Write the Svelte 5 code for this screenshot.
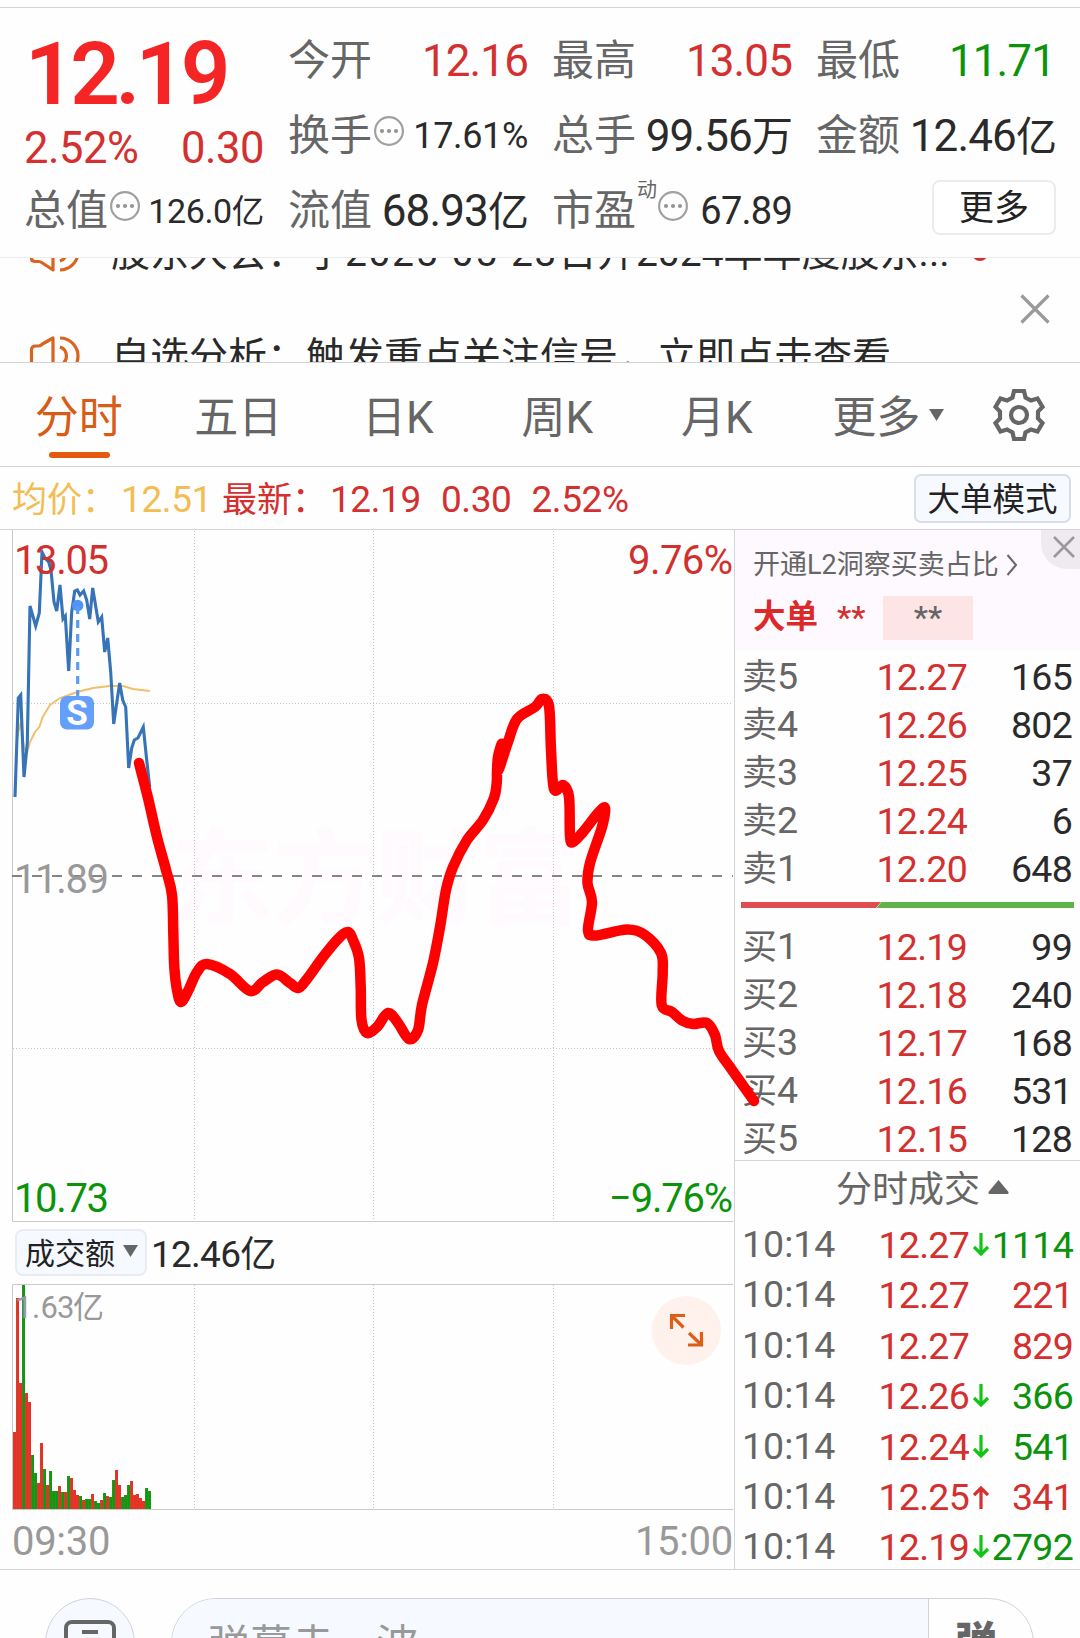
<script>
	const sells = [
		['卖5', '12.27', '165'],
		['卖4', '12.26', '802'],
		['卖3', '12.25', '37'],
		['卖2', '12.24', '6'],
		['卖1', '12.20', '648']
	];
	const buys = [
		['买1', '12.19', '99'],
		['买2', '12.18', '240'],
		['买3', '12.17', '168'],
		['买4', '12.16', '531'],
		['买5', '12.15', '128']
	];
	const trades = [
		{ price: '12.27', arrow: 'down', qty: '1114', side: 'green' },
		{ price: '12.27', arrow: '', qty: '221', side: 'red' },
		{ price: '12.27', arrow: '', qty: '829', side: 'red' },
		{ price: '12.26', arrow: 'down', qty: '366', side: 'green' },
		{ price: '12.24', arrow: 'down', qty: '541', side: 'green' },
		{ price: '12.25', arrow: 'up', qty: '341', side: 'red' },
		{ price: '12.19', arrow: 'down', qty: '2792', side: 'green' }
	];
	const tabs = ['分时', '五日', '日K', '周K', '月K'];

	// turnover per minute: side + bar height
	const volumes =
		'r77 r211 r126 g224 r116 r107 g54 g36 r26 r66 g40 r24 g38 g18 g18 r23 g17 r17 g33 r31 r19 r14 g13 r9 g10 g10 r15 g8 g6 r9 g16 r13 g12 g29 r39 r24 g12 g14 g24 r28 r14 r15 r11 r8 g21 g18'
			.split(' ')
			.map((v, i) => ({ x: 13 + i * 3, h: +v.slice(1), color: v[0] === 'r' ? '#f32a28' : '#0b9a12' }));

	const priceLine =
		'15,797 18.3,698 20.7,695 24,777 27.3,743 30,606 35.7,626 39.3,613 42,552 45,558 48.7,562 51,570 54,602 56.7,611 60,585 63,619 65.3,616 68.7,671 71.7,612 74.7,591 77.3,590 80,595 83.7,591 86.7,600 89.7,619 92.7,588 98.3,622 101.7,617 104.7,652 107.7,638 110.7,672 113.7,724 116.7,703 119.7,683 122.7,700 125.7,707 128.7,768 131.7,748 134.3,740 138,738 143.3,727 146.7,760 149.7,787';
	const avgLine =
		'15,795 17.3,737 20.7,722 24,748 27.3,752 30,742 35,732 39.3,727 42.7,717 50,705 60,698 77.3,692 93,688 110,686 123,686 133,689 149.7,691';

	const drawn = [
		[139, 763], [148, 798], [157, 837], [166, 870], [172, 895], [173.3, 933], [174.3, 967], [177, 990],
		[181, 1002], [188, 991], [197, 972], [207, 964], [230, 974], [250, 991], [263, 982], [277, 974.5],
		[290, 983], [298.5, 988], [307, 979], [323, 957], [338, 939], [347.7, 932], [353, 940], [359, 958],
		[360.7, 987], [361.5, 1020], [367, 1033], [377, 1027], [388, 1013], [398, 1023], [409, 1039],
		[418, 1030], [422, 1005], [433, 963], [440, 927], [446, 890], [453, 867], [467, 840], [483, 820],
		[494, 798], [496.7, 783], [497, 772], [498, 757], [502, 744], [498, 771], [508, 742], [517, 719],
		[535, 707], [542, 699], [549, 706], [551, 750], [554, 789], [563, 785], [569, 797], [570, 836],
		[573, 842], [583, 832], [598, 813], [605, 808], [602, 827], [590, 863], [587.5, 883], [592, 902],
		[588, 930], [595, 935.5], [627, 929.5], [645, 935], [661, 953], [662.7, 973], [661.7, 1005],
		[672, 1012], [683, 1021], [693, 1024], [707, 1023], [715, 1035], [719, 1051], [732, 1070], [754, 1101]
	];

	// catmull-rom through every point
	function smooth(pts) {
		let d = `M${pts[0]}`;
		for (let i = 0; i < pts.length - 1; i++) {
			const a = pts[i - 1] || pts[i];
			const b = pts[i];
			const c = pts[i + 1];
			const e = pts[i + 2] || c;
			d += `C${b[0] + (c[0] - a[0]) / 6},${b[1] + (c[1] - a[1]) / 6} ${c[0] - (e[0] - b[0]) / 6},${c[1] - (e[1] - b[1]) / 6} ${c}`;
		}
		return d;
	}
</script>

{#snippet info()}
	<svg class="info" width="30" height="30" viewBox="0 0 30 30">
		<circle cx="15" cy="15" r="13.9" fill="none" stroke="#a0a0a0" stroke-width="2.200" />
		<circle cx="8" cy="15" r="2.100" fill="#949494" />
		<circle cx="15" cy="15" r="2.100" fill="#949494" />
		<circle cx="22" cy="15" r="2.100" fill="#949494" />
	</svg>
{/snippet}

{#snippet speaker()}
	<svg class="speaker" width="52" height="44" viewBox="0 0 52 44">
		<g fill="none" stroke="#d9641f" stroke-width="3.2">
			<path d="M3.500 29V16q0-4 4-4h3q2 0 4-2L25 4V40L14.500 33q-2-1.500-4-1.500H7.500q-4 0-4-3z" stroke-linejoin="round" />
			<path d="M32 4a18 18 0 0 1 0 36" />
			<path d="M32 13a9.500 9.500 0 0 1 0 18" />
		</g>
	</svg>
{/snippet}

<div class="page">
	<header class="quote">
		<div class="cell big">12.19</div>
		<div class="cell"><span>今开</span><b class="red">12.16</b></div>
		<div class="cell"><span>最高</span><b class="red">13.05</b></div>
		<div class="cell"><span>最低</span><b class="green low">11.71</b></div>

		<div class="cell change red"><b>2.52%</b><b>0.30</b></div>
		<div class="cell"><span>换手{@render info()}</span><b class="m">17.61%</b></div>
		<div class="cell"><span>总手</span><b>99.56<i>万</i></b></div>
		<div class="cell"><span>金额</span><b>12.46<i>亿</i></b></div>

		<div class="cell"><span>总值{@render info()}</span><b class="s">126.0<i>亿</i></b></div>
		<div class="cell"><span>流值</span><b>68.93<i>亿</i></b></div>
		<div class="cell"><span>市盈<sup>动</sup>{@render info()}</span><b class="l">67.89</b></div>
		<div class="cell end"><button class="more">更多</button></div>
	</header>

	<section class="news">
		<div class="lines">
			<div class="line">
				{@render speaker()}
				<p>股东大会：于<em>2025-05-23</em>日开2024年年度股东...</p>
				<span class="dot"></span>
			</div>
			<div class="line">
				{@render speaker()}
				<p>自选分析：触发重点关注信号，立即点击查看</p>
			</div>
		</div>
		<svg class="close" width="30" height="30" viewBox="0 0 30 30">
			<path d="M1.500 1.500l27 27M28.500 1.500l-27 27" stroke="#9a9a9a" stroke-width="3.200" />
		</svg>
	</section>

	<nav class="tabs">
		{#each tabs as tab, i}
			<div class="tab" class:active={i === 0}>{tab}</div>
		{/each}
		<div class="tab last">
			更多<svg width="15" height="12" viewBox="0 0 15 12"><path d="M0 0h15l-7.500 12z" fill="#666" /></svg>
		</div>
		<div class="gear">
			<svg width="54" height="54" viewBox="-27 -27 54 54" fill="none" stroke="#666" stroke-width="4.200">
				<path
					d="M-5-24H5L6.500-17.500L12-14.500L18.500-16.500L23.500-8L19-3.500V3.500L23.500 8L18.500 16.500L12 14.500L6.500 17.500L5 24H-5L-6.500 17.500L-12 14.500L-18.500 16.500L-23.500 8L-19 3.500V-3.500L-23.500-8L-18.500-16.500L-12-14.500L-6.500-17.500z"
				/>
				<circle r="8" />
			</svg>
		</div>
	</nav>

	<div class="latest">
		<span class="avg">均价：<b>12.51</b></span>
		<span class="red">最新：<b>12.19</b><b>0.30</b><b>2.52%</b></span>
		<button class="mode">大单模式</button>
	</div>

	<main>
		<div class="charts">
			<svg class="chart" width="734" height="692" viewBox="0 530 734 692">
				<text x="170" y="916" class="mark" textLength="412">东方财富</text>
				<g class="grid">
					<path d="M194.500 531V1221M373.500 531V1221M553.500 531V1221M13 703.500H733M13 1048.500H733" />
				</g>
				<path d="M12.500 530V1221.500H733" fill="none" stroke="#cacaca" />
				<path d="M12 876H733" stroke="#858585" stroke-width="2" stroke-dasharray="10 10" />
				<polyline points={avgLine} fill="none" stroke="#efc069" stroke-width="1.900" />
				<polyline points={priceLine} fill="none" stroke="#3673b7" stroke-width="3.100" />
				<circle cx="77.700" cy="605.500" r="5.700" fill="#4f93f5" />
				<path d="M77.700 606V696" stroke="#5b9cf2" stroke-width="3.200" stroke-dasharray="8 6" />
				<rect x="60" y="696" width="34" height="33.500" rx="7" fill="#649ffc" />
				<text x="77" y="725" class="s-mark">S</text>
				<text x="14" y="573.500" fill="#d0312f" textLength="95">13.05</text>
				<text x="628" y="573.500" fill="#d0312f" textLength="105">9.76%</text>
				<text x="14" y="892.500" fill="#999" textLength="95">11.89</text>
				<text x="14" y="1211.500" fill="#0b930c" textLength="95">10.73</text>
				<text x="609" y="1211.500" fill="#0b930c" textLength="124">−9.76%</text>
			</svg>

			<div class="volume-head">
				<button class="select">
					成交额<svg width="15" height="12" viewBox="0 0 15 12"><path d="M0 0h15l-7.500 12z" fill="#666" /></svg>
				</button>
				<b>12.46<i>亿</i></b>
			</div>

			<svg class="chart" width="734" height="226" viewBox="0 1284 734 226">
				<g class="grid">
					<path d="M194.500 1285V1509M373.500 1285V1509M553.500 1285V1509" />
				</g>
				{#each volumes as v}
					<rect x={v.x} y={1509 - v.h} width="3" height={v.h} fill={v.color} />
					<rect x={v.x} y={1509 - v.h} width=".7" height={v.h} fill="#7b7b2c" opacity=".6" />
				{/each}
				<path d="M733 1284.500H12.500V1509.500H733" fill="none" stroke="#cacaca" />
				<text x="15 32 40.500 57 73" y="1318" class="max">1.63亿</text>
				<circle cx="686.500" cy="1330.500" r="34.500" fill="#fff1ec" />
				<path
					d="M671.500 1329V1315.500H685M672 1316L683.500 1327.500M688 1345H701.500V1332M701 1344.500L689 1333"
					fill="none"
					stroke="#dc5f18"
					stroke-width="3.200"
				/>
			</svg>

			<div class="times"><span>09:30</span><span>15:00</span></div>
		</div>

		<aside>
			<div class="promo">
				<div class="promo-title">
					开通L2洞察买卖占比<svg width="12" height="22" viewBox="0 0 12 22"><path d="M1.500 1l8.500 10-8.500 10" fill="none" stroke="#666" stroke-width="2" /></svg>
				</div>
				<div class="promo-row"><strong>大单</strong><span class="stars">**</span><span class="box">**</span></div>
				<div class="corner">
					<svg width="22" height="22" viewBox="0 0 22 22"><path d="M1 1l20 20M21 1l-20 20" stroke="#999" stroke-width="2.500" /></svg>
				</div>
			</div>

			<div class="book">
				{#each sells as [label, price, qty]}
					<div class="row"><span>{label[0]}<b>{label[1]}</b></span><b class="red">{price}</b><b>{qty}</b></div>
				{/each}
			</div>
			<svg class="ratio" width="333" height="6" viewBox="0 0 333 6">
				<path d="M0 0H140L135 6H0z" fill="#de4d4f" />
				<path d="M140.500 0H333V6H135.500z" fill="#5fb449" />
			</svg>
			<div class="book buy">
				{#each buys as [label, price, qty]}
					<div class="row"><span>{label[0]}<b>{label[1]}</b></span><b class="red">{price}</b><b>{qty}</b></div>
				{/each}
			</div>

			<div class="trades-title">
				分时成交<svg width="21" height="14" viewBox="0 0 21 14"><path d="M10.500 0L20.500 12q.5 2-1 2H1.500q-1.500 0-1-2z" fill="#666" /></svg>
			</div>
			{#each trades as t}
				<div class="row trade">
					<span><b>10:14</b></span>
					<b class="red">{t.price}</b>
					<svg width="16" height="24" viewBox="0 0 16 24" fill="none" stroke-width="3.200">
						{#if t.arrow === 'down'}
							<path d="M8 0V21M1 14L8 21L15 14" stroke="#12c416" />
						{:else if t.arrow === 'up'}
							<path d="M8 24V3M1 10L8 3L15 10" stroke="#d3302f" />
						{/if}
					</svg>
					<b class={t.side}>{t.qty}</b>
				</div>
			{/each}
		</aside>
	</main>

	<footer>
		<div class="round">
			<svg width="52" height="44" viewBox="0 0 52 44" fill="none" stroke="#666" stroke-width="4">
				<rect x="2" y="2" width="48" height="40" rx="6" />
				<path d="M18 12H34" />
			</svg>
		</div>
		<div class="pill">
			<span>弹幕走一波</span>
			<strong>弹</strong>
		</div>
	</footer>

	<svg class="drawing" width="1080" height="1638" viewBox="0 0 1080 1638">
		<path d={smooth(drawn)} fill="none" stroke="#fe0000" stroke-width="10.500" stroke-linecap="round" stroke-linejoin="round" />
	</svg>
</div>

<style>
	.page {
		position: relative;
		width: 1080px;
		height: 1638px;
		overflow: hidden;
		background: #fefefe;
		color: #2a2a2a;
		font-family: Roboto, 'Noto Sans CJK SC', sans-serif;
		box-sizing: border-box;
		padding-top: 7px;
	}
	b {
		font-weight: 400;
		letter-spacing: -0.02em;
	}
	i {
		font-style: normal;
	}
	button {
		font-family: inherit;
		color: #222;
		padding: 0;
		box-sizing: border-box;
	}
	.red {
		color: #d3302f;
	}
	.green {
		color: #0b930c;
	}

	.quote {
		display: grid;
		grid-template-columns: repeat(4, 240px);
		grid-template-rows: repeat(3, 75px);
		column-gap: 24px;
		height: 250px;
		padding: 15px 24px 0;
		box-sizing: border-box;
		border-top: 1px solid #d4d4d4;
	}
	.cell {
		display: flex;
		justify-content: space-between;
		align-items: center;
		font-size: 42px;
		line-height: 60px;
		white-space: nowrap;
	}
	.cell span {
		display: flex;
		align-items: center;
		color: #666;
	}
	.cell b {
		font-size: 44px;
		padding-top: 1px;
	}
	.cell b i {
		font-size: 41px;
	}
	.cell b.s {
		font-size: 34px;
		letter-spacing: -0.01em;
	}
	.cell b.s i {
		font-size: 32.5px;
	}
	.cell b.m {
		font-size: 36px;
		letter-spacing: -0.01em;
	}
	.cell b.l {
		font-size: 38px;
	}
	.cell b.low {
		letter-spacing: -0.02em;
		padding-right: 1px;
	}
	.big {
		color: #f52525;
		font-size: 87px;
		font-weight: 600;
		line-height: 49px;
		letter-spacing: -4.5px;
		padding: 27px 0 0 1px;
	}
	.change {
		padding-top: 26px;
		height: 49px;
	}
	.cell.change b {
		font-size: 43.5px;
		line-height: 40px;
		letter-spacing: -0.01em;
	}
	.info {
		margin: -10px 0 0 2px;
	}
	.cell sup {
		font-size: 20px;
		line-height: 20px;
		margin: -42px 0 0 1px;
	}
	.cell sup + .info {
		margin-left: 1px;
	}
	.end {
		justify-content: flex-end;
	}
	.more {
		width: 124px;
		height: 55px;
		margin-top: -7px;
		border: 2px solid #ececec;
		border-radius: 8px;
		background: #fff;
		font-size: 35px;
		line-height: 54px;
	}

	.news {
		display: flex;
		justify-content: space-between;
		align-items: center;
		height: 105px;
		box-sizing: border-box;
		border-top: 1px solid #ececec;
		padding: 0 30px 0 28px;
		overflow: hidden;
	}
	.line {
		display: flex;
		align-items: center;
		height: 104px;
	}
	.speaker {
		margin-top: -5px;
	}
	.line p {
		margin: -2px 0 0 31px;
		font-size: 39px;
		line-height: 60px;
		white-space: nowrap;
	}
	.line em {
		font-style: normal;
		letter-spacing: 1.6px;
	}
	.lines {
		margin-top: -8px;
	}
	.close {
		margin-top: -2px;
	}
	.dot {
		width: 16px;
		height: 16px;
		margin: -3px 0 0 23px;
		border-radius: 50%;
		background: #d3302f;
	}

	.tabs {
		display: flex;
		height: 105px;
		box-sizing: border-box;
		border-top: 1px solid #d4d4d4;
		border-bottom: 1px solid #d4d4d4;
		font-size: 44px;
		line-height: 110px;
		color: #666;
	}
	.tab {
		position: relative;
		width: 159.5px;
		text-align: center;
		text-indent: -2px;
	}
	.tab.last svg {
		position: absolute;
		left: 131px;
		top: 46px;
	}
	.active {
		color: #d85c16;
	}
	.active::after {
		content: '';
		position: absolute;
		left: 49px;
		bottom: 8px;
		width: 61px;
		height: 6px;
		border-radius: 3px;
		background: #e5590f;
	}
	.gear {
		flex: 1;
		display: flex;
		align-items: center;
		justify-content: center;
	}

	.latest {
		display: flex;
		align-items: center;
		height: 63px;
		box-sizing: border-box;
		border-bottom: 1px solid #d4d4d4;
		padding: 0 9px 0 12px;
		font-size: 35px;
		white-space: nowrap;
	}
	.latest span {
		margin-top: -4px;
	}
	.latest b {
		font-size: 37px;
		letter-spacing: -0.4px;
		margin-right: 20px;
	}
	.latest .red b:first-child {
		margin-left: 3px;
	}
	.latest .avg {
		color: #f2bd52;
	}
	.latest .avg b {
		margin: 0 10px 0 4px;
	}
	.mode {
		width: 157px;
		height: 49px;
		margin-left: auto;
		border: 2px solid #d9dde5;
		border-radius: 7px;
		background: #f6f9ff;
		font-size: 32.5px;
		line-height: 49px;
	}

	main {
		display: flex;
		height: 1039px;
		border-bottom: 1px solid #d4d4d4;
	}
	.charts {
		width: 734px;
	}
	.chart {
		display: block;
	}
	.chart text {
		font-size: 40px;
	}
	.grid path {
		stroke: #c4c4c4;
		stroke-dasharray: 1 2;
	}
	.chart .mark {
		font-size: 104px;
		font-weight: 700;
		fill: #fefafe;
	}
	.chart .s-mark {
		font-size: 35px;
		font-weight: 700;
		fill: #fff;
		text-anchor: middle;
	}
	.chart .max {
		font-size: 31px;
		fill: #999;
	}
	.volume-head {
		display: flex;
		align-items: center;
		height: 62px;
		padding-left: 15px;
	}
	.volume-head > b {
		font-size: 37px;
		margin: -5px 0 0 4px;
	}
	.volume-head i {
		font-size: 36px;
	}
	.select {
		display: flex;
		align-items: center;
		gap: 8px;
		width: 132px;
		height: 47px;
		margin-top: -2px;
		padding: 0 0 3px 8px;
		border: 2px solid #e9ecf2;
		border-radius: 8px;
		background: #f6f9ff;
		font-size: 30px;
	}
	.times {
		display: flex;
		justify-content: space-between;
		padding: 0 1px 0 12px;
		font-size: 40px;
		line-height: 64px;
		letter-spacing: -0.3px;
		color: #999;
	}

	aside {
		flex: 1;
		border-left: 1px solid #d3d4dc;
	}
	.promo {
		position: relative;
		height: 120px;
		box-sizing: border-box;
		padding: 18px 0 0 18px;
		background: #fdf9fe;
		color: #666;
		white-space: nowrap;
	}
	.promo-title {
		display: flex;
		align-items: center;
		gap: 7px;
		font-size: 27px;
		line-height: 34px;
	}
	.promo-row {
		display: flex;
		align-items: center;
		height: 44px;
		margin-top: 14px;
		font-size: 32px;
	}
	.promo-row strong {
		width: 66px;
		font-size: 32.5px;
		line-height: 40px;
		margin-top: -2px;
		color: #dc2a2a;
	}
	.stars {
		width: 28px;
		margin: -2px 0 0 18px;
		font-weight: 500;
		color: #d3302f;
	}
	.box {
		width: 90px;
		height: 44px;
		margin-left: 18px;
		text-align: center;
		line-height: 42px;
		font-weight: 500;
		background: #fee5e5;
	}
	.corner {
		position: absolute;
		top: 0;
		right: 0;
		width: 39px;
		height: 39px;
		box-sizing: border-box;
		padding: 6px 0 0 12px;
		border-bottom-left-radius: 26px;
		background: #eeeaef;
	}
	.corner svg {
		display: block;
	}
	.book {
		padding-top: 2px;
	}
	.row {
		display: grid;
		grid-template-columns: 110px 115px 105px;
		align-items: center;
		height: 48px;
		padding-left: 7px;
		font-size: 35px;
		line-height: 48px;
		white-space: nowrap;
	}
	.row b {
		font-size: 37.5px;
		text-align: right;
	}
	.row span {
		color: #666;
	}
	.ratio {
		display: block;
		margin: 10px 0 0 6px;
	}
	.buy {
		padding-top: 14px;
		height: 238px;
		border-bottom: 1px solid #d3d4dc;
	}
	.trades-title {
		display: flex;
		align-items: center;
		gap: 8px;
		height: 58px;
		padding: 0 0 0 101px;
		line-height: 58px;
		font-size: 36px;
		color: #666;
	}
	.trades-title svg {
		margin-top: -6px;
	}
	.trade {
		grid-template-columns: 110px 117px 20px 84px;
		height: 50.4px;
		line-height: 50px;
	}
	.trade span b {
		letter-spacing: 0;
	}
	.trade svg {
		justify-self: end;
	}

	footer {
		display: flex;
		padding: 28px 45px 0;
	}
	.round {
		display: flex;
		justify-content: center;
		width: 90px;
		height: 90px;
		box-sizing: border-box;
		padding-top: 21px;
		border: 1px solid #d0d3dc;
		border-radius: 50%;
		background: #f6f9ff;
	}
	.pill {
		display: flex;
		width: 863px;
		height: 90px;
		box-sizing: border-box;
		margin-left: 36px;
		border: 1px solid #d0d3dc;
		border-radius: 45px;
		overflow: hidden;
		font-size: 42px;
		line-height: 94px;
	}
	.pill span {
		width: 720px;
		padding-left: 36px;
		background: #f6f9ff;
		border-right: 1px solid #d0d3dc;
		color: #999;
	}
	.pill strong {
		padding-left: 26px;
		line-height: 88px;
		font-weight: 800;
		color: #666;
	}
	.drawing {
		position: absolute;
		left: 0;
		top: 0;
		pointer-events: none;
	}
</style>
